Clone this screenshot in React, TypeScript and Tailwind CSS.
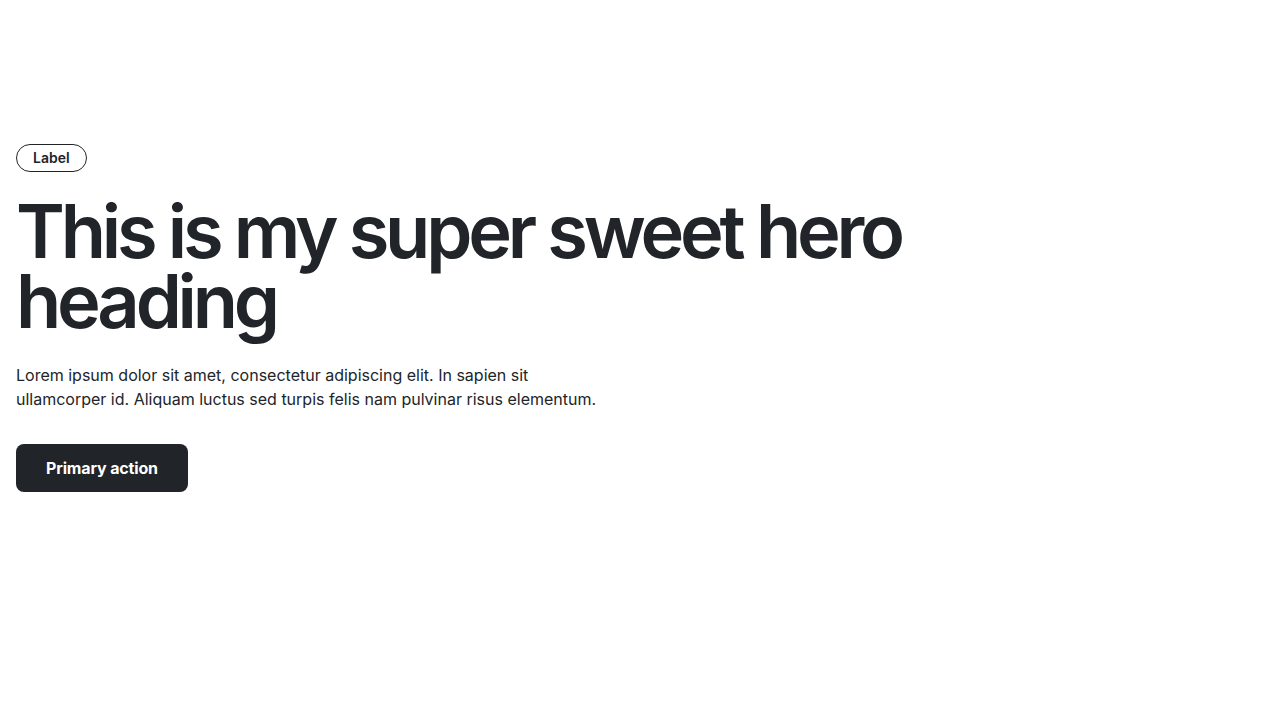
export default function App() {
  return (
    <div className="min-h-screen bg-white px-4 pt-[144px] font-['Inter',sans-serif] text-[#212529]">
      <div className="flex flex-col items-start">
        <span className="rounded-full border border-[#212529] px-4 py-[4px] text-sm font-semibold leading-[18px]">
          Label
        </span>
        <h1 className="mt-[24px] text-[74px] font-semibold leading-[70px] tracking-[-0.057em]">
          This is my super sweet hero
          <br />
          heading
        </h1>
        <p className="mt-[27px] max-w-[600px] text-base leading-6">
          Lorem ipsum dolor sit amet, consectetur adipiscing elit. In sapien sit ullamcorper id. Aliquam luctus sed turpis felis nam pulvinar risus elementum.
        </p>
        <button className="mt-[33px] h-12 rounded-lg bg-[#212529] px-[30px] text-base font-bold tracking-[-0.01em] text-white">
          Primary action
        </button>
      </div>
    </div>
  )
}
